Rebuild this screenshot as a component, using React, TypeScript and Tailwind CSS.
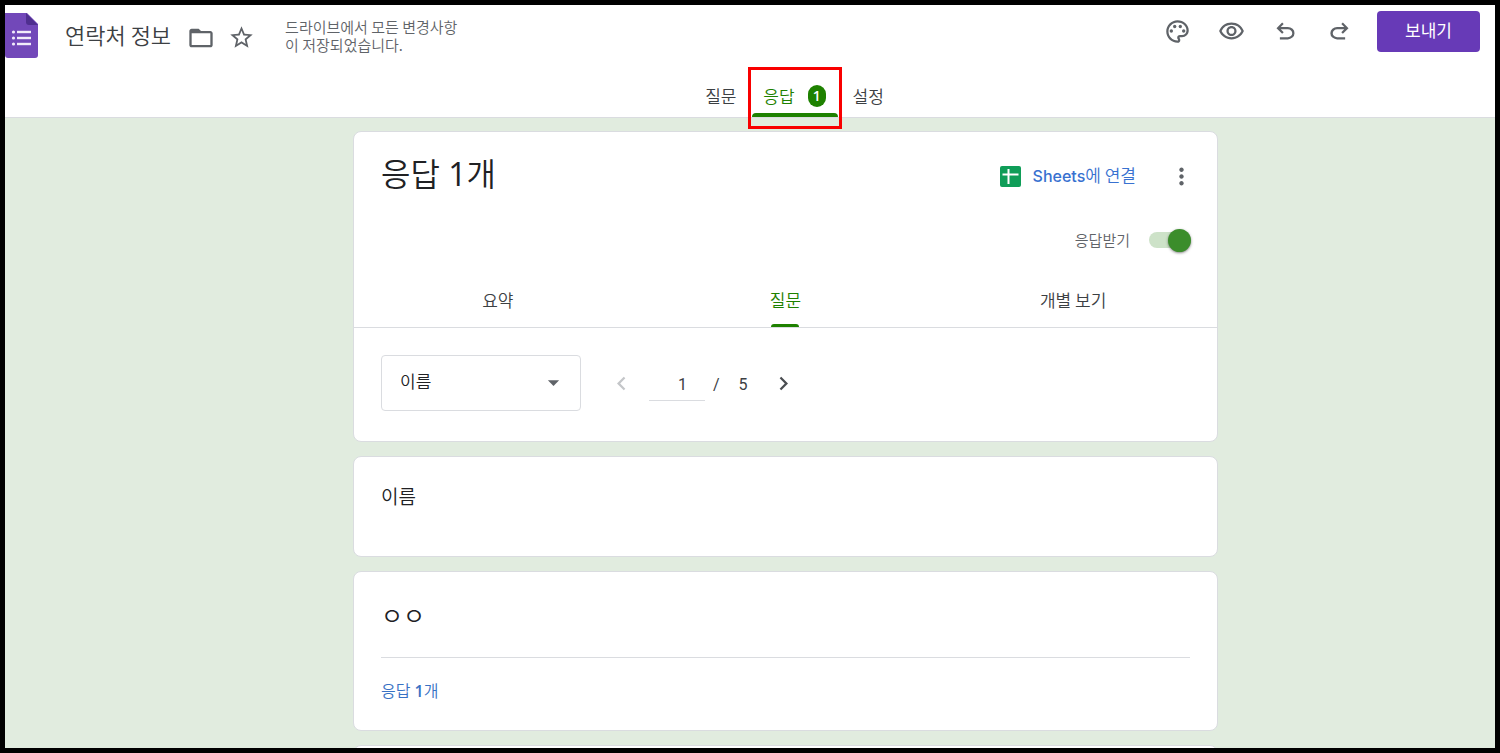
import type { ReactNode } from "react";
import {
  MdArrowDropDown,
  MdChevronLeft,
  MdChevronRight,
  MdFolderOpen,
  MdMoreVert,
  MdOutlinePalette,
  MdOutlineVisibility,
  MdStarBorder,
} from "react-icons/md";

interface TabItem {
  label: string;
  active?: boolean;
  count?: number;
}

interface ToolItem {
  label: string;
  icon: ReactNode;
}

const FormsLogo = () => (
  <svg viewBox="0 0 33 45" className="h-[45px] w-[33px]" aria-hidden="true">
    <path d="M0 0H22L33 11V42a3 3 0 0 1-3 3H3a3 3 0 0 1-3-3Z" fill="#7248b9" />
    <path d="M21 0L33 12H24a3 3 0 0 1-3-3Z" fill="#4f2f8f" />
    <g fill="#f1ebfa">
      <circle cx="8.5" cy="19" r="1.6" />
      <circle cx="8.5" cy="25" r="1.6" />
      <circle cx="8.5" cy="31" r="1.6" />
      <rect x="12" y="17.8" width="14" height="2.4" />
      <rect x="12" y="23.8" width="14" height="2.4" />
      <rect x="12" y="29.8" width="14" height="2.4" />
    </g>
  </svg>
);

const SheetsIcon = () => (
  <svg viewBox="0 0 21 21" className="size-[21px]" aria-hidden="true">
    <rect width="21" height="21" rx="2" fill="#0f9d58" />
    <path d="M8.5 3V18M2.5 8.5H18.5" stroke="#fff" strokeWidth="2" fill="none" />
  </svg>
);

const UndoIcon = () => (
  <svg viewBox="0 -960 960 960" className="size-[27px]" fill="currentColor" aria-hidden="true">
    <path d="M280-200v-80h284q63 0 109.5-40T720-420q0-60-46.5-100T564-560H312l104 104-56 56-200-200 200-200 56 56-104 104h252q97 0 169.5 63T800-420q0 94-72.5 157T564-200H280Z" />
  </svg>
);

const RedoIcon = () => (
  <svg viewBox="0 -960 960 960" className="size-[27px]" fill="currentColor" aria-hidden="true">
    <path d="M396-200q-97 0-169.5-63T154-420q0-94 72.5-157T396-640h252L544-744l56-56 200 200-200 200-56-56 104-104H396q-63 0-109.5 40T240-420q0 60 46.5 100T396-280h284v80H396Z" />
  </svg>
);

const tools: ToolItem[] = [
  { label: "테마 맞춤설정", icon: <MdOutlinePalette size={27} /> },
  { label: "미리보기", icon: <MdOutlineVisibility size={27} /> },
  { label: "실행취소", icon: <UndoIcon /> },
  { label: "재실행", icon: <RedoIcon /> },
];

const formTabs: TabItem[] = [
  { label: "질문" },
  { label: "응답", active: true, count: 1 },
  { label: "설정" },
];

const viewTabs: TabItem[] = [
  { label: "요약" },
  { label: "질문", active: true },
  { label: "개별 보기" },
];

const Header = () => (
  <header className="flex h-[113px] shrink-0 flex-col justify-between border-b border-[#dadce0] bg-white">
    <div className="flex items-start justify-between pr-[15px]">
      <div className="flex items-center pt-2">
        <FormsLogo />
        <h1 className="ml-[27px] pb-1 text-[22px] leading-7 font-[350] text-[#3c4043]">연락처 정보</h1>
        <button type="button" aria-label="폴더로 이동" className="ml-4 pt-1 text-[#5f6368]">
          <MdFolderOpen size={28} />
        </button>
        <button type="button" aria-label="별표" className="ml-[13px] pt-1 text-[#5f6368]">
          <MdStarBorder size={27} />
        </button>
        <p className="ml-[30px] w-[180px] pt-px text-[15px] leading-[18px] font-[350] text-[#5f6368]">
          드라이브에서 모든 변경사항이 저장되었습니다.
        </p>
      </div>

      <div className="flex items-center pt-[6px]">
        <div className="mr-6 flex items-center gap-[27px] text-[#5f6368]">
          {tools.map((tool) => (
            <button key={tool.label} type="button" aria-label={tool.label}>
              {tool.icon}
            </button>
          ))}
        </div>
        <button
          type="button"
          className="h-[41px] w-[103px] rounded bg-[#673ab7] pb-[3px] text-[17px] leading-6 text-white"
        >
          보내기
        </button>
      </div>
    </div>

    <nav className="flex justify-center pl-[89px]">
      {formTabs.map((tab) => (
        <button
          key={tab.label}
          type="button"
          className={`relative flex h-[42px] items-center justify-center gap-[13px] text-[17px] font-[350] ${
            tab.active ? "mx-[15px] w-[86px] text-[#1e8100]" : "text-[#3c4043]"
          }`}
        >
          {tab.label}
          {tab.count && (
            <span className="flex h-[22px] w-[18px] items-center justify-center rounded-full bg-[#1e8100] font-['Open_Sans','Noto_Sans_CJK_KR',sans-serif] text-sm font-semibold text-white">
              {tab.count}
            </span>
          )}
          {tab.active && (
            <>
              <span className="absolute inset-x-0 bottom-0 h-1 rounded-t bg-[#1e8100]" />
              <span className="absolute -inset-x-1 -top-2 -bottom-3 z-10 border-3 border-[#f90000]" />
            </>
          )}
        </button>
      ))}
    </nav>
  </header>
);

const Card = ({ children, className = "" }: { children?: ReactNode; className?: string }) => (
  <section className={`shrink-0 rounded-lg border border-[#dadce0] bg-white ${className}`}>
    {children}
  </section>
);

const ResponsesCard = () => (
  <Card className="pb-[30px]">
    <div className="flex items-center justify-between pt-5 pr-[22px] pl-[27px]">
      <h2 className="pb-1 font-['Open_Sans','Noto_Sans_CJK_KR',sans-serif] text-[32px] leading-11 font-[350] text-[#202124]">
        응답 <span className="font-normal">1</span>개
      </h2>
      <div className="flex items-center">
        <a
          href="#"
          className="flex items-center gap-3 text-[17px] leading-6 text-[#3871d0]"
        >
          <SheetsIcon />
          <span className="pb-px">
            <span className="font-['Inter',sans-serif] text-base font-medium">Sheets</span>
            <span className="font-[350]">에 연결</span>
          </span>
        </a>
        <button type="button" aria-label="더보기" className="ml-8 text-[#5f6368]">
          <MdMoreVert size={27} />
        </button>
      </div>
    </div>

    <div className="mt-7 flex justify-end pr-[26px]">
      <label className="flex items-center gap-[19px] text-[15px] leading-6 font-[350] text-[#5f6368]">
        응답받기
        <span className="relative flex h-6 w-[42px] items-center">
          <input type="checkbox" defaultChecked className="peer sr-only" />
          <span className="h-4 w-full rounded-full bg-[#cde2c8]" />
          <span className="absolute right-0 size-[23px] rounded-full bg-[#3b8d2b] shadow-sm shadow-black/40" />
        </span>
      </label>
    </div>

    <div className="mt-5 grid grid-cols-3 border-b border-[#dadce0]">
      {viewTabs.map((tab) => (
        <button
          key={tab.label}
          type="button"
          className={`relative h-[55px] text-[17px] font-[350] ${tab.active ? "text-[#1e8100]" : "text-[#3c4043]"}`}
        >
          {tab.label}
          {tab.active && (
            <span className="absolute bottom-0 left-1/2 h-[3px] w-7 -translate-x-1/2 rounded-t bg-[#1e8100]" />
          )}
        </button>
      ))}
    </div>

    <div className="mt-[27px] flex items-center pl-[27px]">
      <div className="relative">
        <select
          aria-label="질문 선택"
          className="h-14 w-[200px] appearance-none rounded border border-[#dadce0] bg-white pb-1 pl-[18px] text-[17px] font-[350] text-[#202124]"
        >
          <option>이름</option>
        </select>
        <MdArrowDropDown size={27} className="pointer-events-none absolute top-[14px] right-[14px] text-[#5f6368]" />
      </div>
      <div className="flex items-center font-['Roboto','Noto_Sans_CJK_KR',sans-serif] text-base text-[#3c4043]">
        <button type="button" aria-label="이전 질문" disabled className="ml-[27px] text-[#c4c6c9]">
          <MdChevronLeft size={27} />
        </button>
        <input
          type="text"
          aria-label="질문 번호"
          defaultValue="1"
          className="mt-1 ml-[14px] h-8 w-14 border-b border-[#dadce0] pr-[18px] text-right"
        />
        <span className="ml-2 pt-[3px]">/</span>
        <span className="ml-[19px] pt-[3px]">5</span>
        <button type="button" aria-label="다음 질문" className="ml-[22px] text-[#4a4d51]">
          <MdChevronRight size={27} />
        </button>
      </div>
    </div>
  </Card>
);

const App = () => {
  return (
    <div className="flex h-screen flex-col overflow-hidden border-5 border-black bg-[#e1ecdf] font-['Noto_Sans_CJK_KR',sans-serif]">
      <Header />

      <main className="flex-1 overflow-hidden pt-[13px] pl-[71px]">
        <div className="mx-auto flex w-full max-w-[865px] flex-col gap-[14px]">
          <ResponsesCard />

          <Card className="px-[27px] pt-[26px] pb-[47px]">
            <h3 className="text-[19px] leading-[26px] font-[350] text-[#202124]">이름</h3>
          </Card>

          <Card className="px-[27px] pt-[25px]">
            <p className="border-b border-[#dadce0] pb-6 text-2xl leading-9 font-[350] text-[#202124]">ㅇㅇ</p>
            <a
              href="#"
              className="mt-5 mb-[26px] block w-fit font-['Open_Sans','Noto_Sans_CJK_KR',sans-serif] text-base leading-[26px] font-[350] text-[#3871c4]"
            >
              응답 <span className="font-semibold">1</span>개
            </a>
          </Card>

          <Card className="h-24" />
        </div>
      </main>
    </div>
  );
};

export default App;
